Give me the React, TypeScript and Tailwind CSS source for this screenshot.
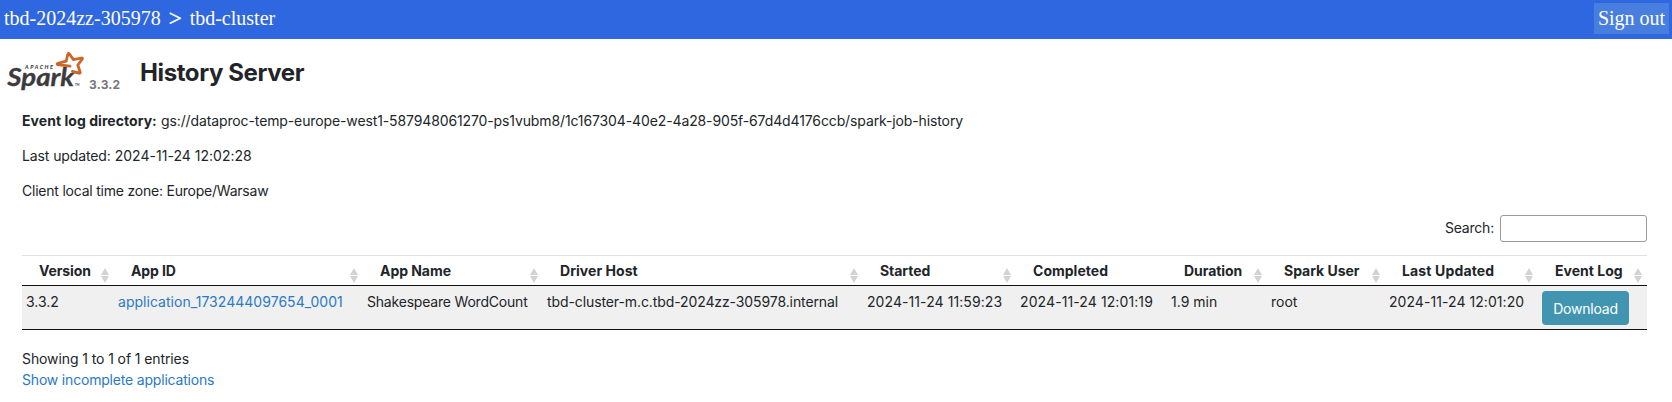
const columns = [
  { label: 'Version', width: 'w-[92px]', track: 'tracking-[-0.1px]' },
  { label: 'App ID', width: 'w-[249px]', track: 'tracking-[-0.1px]' },
  { label: 'App Name', width: 'w-[180px]', track: 'tracking-[-0.05px]' },
  { label: 'Driver Host', width: 'w-[320px]', track: 'tracking-[0.05px]' },
  { label: 'Started', width: 'w-[153px]', track: 'tracking-[-0.05px]' },
  { label: 'Completed', width: 'w-[151px]', track: 'tracking-[0.02px]', plain: true },
  { label: 'Duration', width: 'w-[100px]', track: 'tracking-[-0.05px]' },
  { label: 'Spark User', width: 'w-[118px]', track: 'tracking-[-0.02px]' },
  { label: 'Last Updated', width: 'w-[153px]', track: 'tracking-[0.15px]' },
  { label: 'Event Log', width: 'w-[109px]', track: 'tracking-[0.02px]' },
];

function SortArrows() {
  return (
    <svg viewBox="0 0 8 15" className="absolute right-[5.5px] bottom-[2px] h-[15px] w-2" fill="#d3d3d3">
      <path d="M4 0 8 7H0z" />
      <path d="M0 8h8l-4 7z" />
    </svg>
  );
}

function SparkLogo() {
  return (
    <svg viewBox="0 0 78 44" className="h-[44px] w-[78px] shrink-0 overflow-visible">
      <g fill="#3c3a3e" fontFamily="Lato, sans-serif" fontStyle="italic">
        <text x="17" y="20.3" fontSize="5.5" fontWeight="900" textLength="28">APACHE</text>
        <text x="-0.8" y="36.8" fontSize="25" fontWeight="700" stroke="#3c3a3e" strokeWidth="0.3" textLength="67" lengthAdjust="spacingAndGlyphs">Spark</text>
        <text x="67" y="37" fontSize="3" fontWeight="700">TM</text>
      </g>
      <path
        d="M62 17.2 49.5 15.6Q48.5 15 50 14.4L58.2 12.2 59.8 5.2Q60.4 3.6 61.4 5L65.5 10.6 73.4 9Q75 9 74.2 10.2L69.8 16 72.2 23.2Q72.2 24.6 70.8 24.2L64.5 22.3"
        fill="none"
        stroke="#cb6628"
        strokeWidth="2.8"
        strokeLinejoin="round"
        strokeLinecap="round"
      />
    </svg>
  );
}

export default function App() {
  return (
    <div className="h-[402px] overflow-hidden bg-white font-['Inter','Liberation_Sans',sans-serif] text-[14px] leading-[21px] text-[#212529]">
      <header className="flex h-[39px] items-start justify-between bg-[#2f67e0] pl-1 pr-[3px] pt-[3px] font-['Liberation_Serif',serif] text-[20px] text-white">
        <span className="flex leading-[30px]">
          <span>tbd-2024zz-305978</span>
          <span className="w-[29px] pt-[1px] text-center text-[23px] leading-[30px] [-webkit-text-stroke:0.4px_white]">&gt;</span>
          <span>tbd-cluster</span>
        </span>
        <a className="h-[31px] w-[75px] bg-[#477edf] text-center leading-[31px]">Sign out</a>
      </header>

      <div className="flex h-[61px] pl-2 pt-[10px]">
        <SparkLogo />
        <span className="ml-[3px] mt-[28px] h-4 w-[51px] text-[12px] font-bold leading-4 tracking-[0.2px] text-[#777]">3.3.2</span>
        <h3 className="mt-[9px] text-[24px] font-bold leading-[30px] tracking-[-0.4px]">History Server</h3>
      </div>

      <main className="pl-[22px] pr-[25px]">
        <div className="flex flex-col gap-[14px] pt-[10px]">
          <p className="flex gap-[4px] whitespace-nowrap">
            <strong className="w-[135px] tracking-[0.05px]">Event log directory:</strong>
            <span className="tracking-[-0.12px]">gs://dataproc-temp-europe-west1-587948061270-ps1vubm8/1c167304-40e2-4a28-905f-67d4d4176ccb/spark-job-history</span>
          </p>
          <p><span className="tracking-[-0.11px]">Last updated:</span> <span className="tracking-[0.02px]">2024-11-24 12:02:28</span></p>
          <p className="tracking-[-0.22px]">Client local time zone: Europe/Warsaw</p>
        </div>

        <label className="mt-[14px] flex items-center justify-end gap-[6px]">
          <span className="-mt-[2px] tracking-[-0.2px]">Search:</span>
          <input className="h-[27px] w-[147px] rounded-[3px] border border-[#9a9a9a] bg-white px-1 outline-none" />
        </label>

        <table className="mt-[13px] w-[1625px] table-fixed border-separate border-spacing-0 text-left">
          <thead>
            <tr>
              {columns.map((c) => (
                <th key={c.label} className={`${c.width} ${c.track} relative h-[31px] whitespace-nowrap border-t border-b border-t-[#dee2e6] border-b-[#111] p-0 pl-[17px] font-bold`}>
                  {c.label}
                  {!c.plain && <SortArrows />}
                </th>
              ))}
            </tr>
          </thead>
          <tbody>
            <tr className="bg-[#f0f0f0] align-top *:h-[44px] *:whitespace-nowrap *:border-b *:border-[#111] *:p-0 *:pl-1 *:pt-[5px]">
              <td>3.3.2</td>
              <td><a className="tracking-[0.03px] text-[#2a7ac4]">application_1732444097654_0001</a></td>
              <td className="tracking-[-0.2px]">Shakespeare WordCount</td>
              <td className="tracking-[-0.1px]">tbd-cluster-m.c.tbd-2024zz-305978.internal</td>
              <td className="tracking-[0.08px]">2024-11-24 11:59:23</td>
              <td className="tracking-[0.1px]">2024-11-24 12:01:19</td>
              <td>1.9 min</td>
              <td>root</td>
              <td className="tracking-[0.06px]">2024-11-24 12:01:20</td>
              <td>
                <a className="flex h-[34px] w-[87px] items-center justify-center rounded-[4px] bg-[#4195b0] pt-[1px] tracking-[-0.2px] text-white">Download</a>
              </td>
            </tr>
          </tbody>
        </table>

        <p className="mt-[18px] tracking-[-0.1px]">Showing 1 to 1 of 1 entries</p>
        <a className="block tracking-[-0.19px] text-[#2a7ac4]">Show incomplete applications</a>
      </main>
    </div>
  );
}
